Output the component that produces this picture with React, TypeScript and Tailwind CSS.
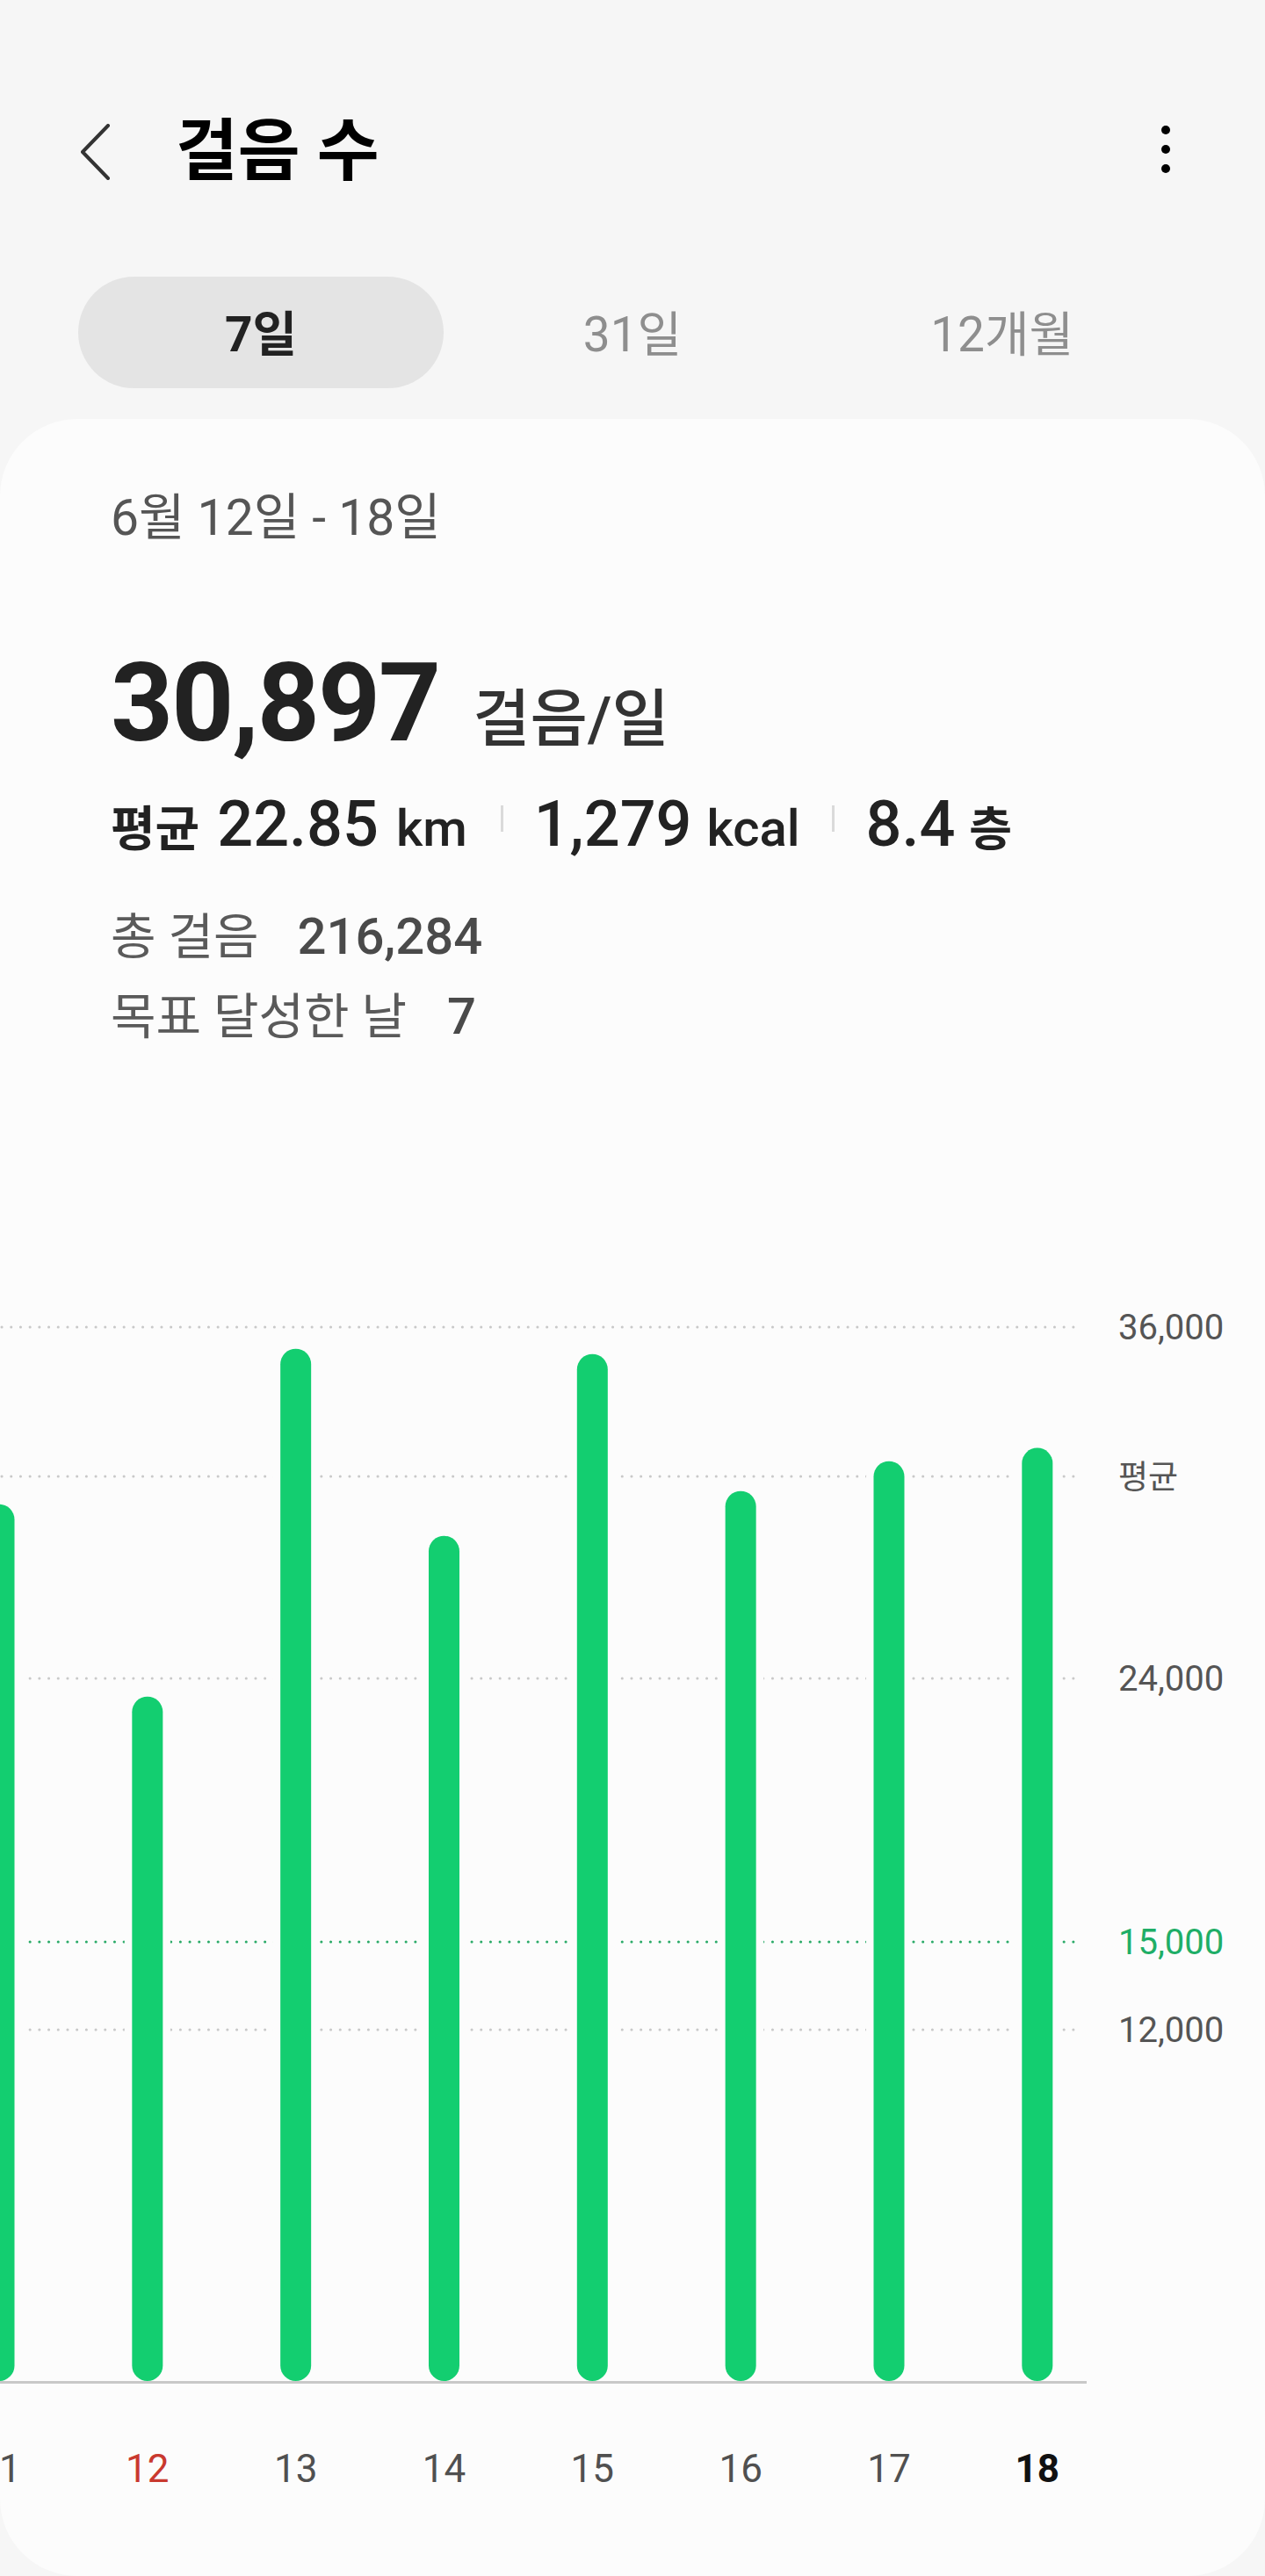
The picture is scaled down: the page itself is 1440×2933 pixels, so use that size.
import React from 'react';

const days = [
  { day: 11, steps: 29950, tone: 'normal' },
  { day: 12, steps: 23380, tone: 'sunday' },
  { day: 13, steps: 35260, tone: 'normal' },
  { day: 14, steps: 28870, tone: 'normal' },
  { day: 15, steps: 35080, tone: 'normal' },
  { day: 16, steps: 30400, tone: 'normal' },
  { day: 17, steps: 31420, tone: 'normal' },
  { day: 18, steps: 31874, tone: 'today' },
];

const AVG = 30897;
const COL = 168.83;
const FIRST_X = -1;
const ZERO_Y = 1261;
const toY = (v: number) => ZERO_Y - v / 30;

const gridLines = [
  { value: 36000, label: '36,000', kind: 'plain' },
  { value: AVG, label: '평균', kind: 'avg' },
  { value: 24000, label: '24,000', kind: 'plain' },
  { value: 15000, label: '15,000', kind: 'goal' },
  { value: 12000, label: '12,000', kind: 'plain' },
];

const dayColor: Record<string, string> = {
  normal: 'text-[#505050] font-normal',
  sunday: 'text-[#c9392f] font-normal',
  today: 'text-[#111111] font-bold',
};

const labelClass: Record<string, string> = {
  plain: 'text-[40px] text-[#555555]',
  avg: 'text-[37px] text-[#555555]',
  goal: 'text-[40px] text-[#1fae67]',
};

const StepsChart: React.FC = () => {
  return (
    <div className="relative h-[1280px]">
      <svg width="1240" height="1280" className="block">
        {gridLines.map((g) => (
          <line
            key={g.label}
            x1="2"
            x2="1230"
            y1={toY(g.value)}
            y2={toY(g.value)}
            stroke={g.kind === 'goal' ? '#2bab69' : '#c9c9c9'}
            strokeWidth="3"
            strokeLinecap="round"
            strokeDasharray="0.1 10.6"
          />
        ))}
        {days.map((d, i) => {
          const cx = FIRST_X + COL * i;
          const top = toY(d.steps);
          return (
            <rect key={`h${d.day}`} x={cx - 26} y={top - 8} width="52" height={ZERO_Y - top + 8} rx="26" fill="#fcfcfc" />
          );
        })}
        <line x1="0" x2="1237" y1="1262.5" y2="1262.5" stroke="#c8c8c8" strokeWidth="3" />
        {days.map((d, i) => {
          const cx = FIRST_X + COL * i;
          const top = toY(d.steps);
          return (
            <rect key={d.day} x={cx - 17.5} y={top} width="35" height={ZERO_Y - top} rx="17.5" fill="#13ce70" />
          );
        })}
      </svg>
      {gridLines.map((g) => (
        <div
          key={g.label}
          className={`absolute left-[1273px] -translate-y-1/2 leading-none ${labelClass[g.kind]}`}
          style={{ top: toY(g.value) + 1 }}
        >
          {g.label}
        </div>
      ))}
    </div>
  );
};

const App: React.FC = () => {
  return (
    <div className="h-[2933px] w-[1440px] overflow-hidden bg-[#f6f6f6] font-['Roboto','Noto_Sans_CJK_KR',sans-serif]">
      {/* Header */}
      <div className="mt-[118px] flex h-[110px] items-center pl-[90px] pr-[107px]">
        <svg width="36" height="64" viewBox="0 0 36 64" fill="none">
          <path d="M33 2 L4 32 L33 62" stroke="#333333" strokeWidth="4" strokeLinecap="round" strokeLinejoin="round" />
        </svg>
        <h1 className="ml-[74px] text-[77px] font-bold leading-none text-black">걸음 수</h1>
        <svg width="12" height="56" viewBox="0 0 12 56" className="ml-auto -translate-y-[3px]">
          <circle cx="6" cy="6" r="5" fill="#000" />
          <circle cx="6" cy="28" r="5" fill="#000" />
          <circle cx="6" cy="50" r="5" fill="#000" />
        </svg>
      </div>

      {/* Period tabs */}
      <div className="mt-[87px] grid h-[127px] grid-cols-3 px-[89px]">
        <div className="flex w-[416px] items-center justify-center rounded-full bg-[#e4e4e4] pt-[6px] text-[55px] font-bold text-[#222222]">7일</div>
        <div className="flex items-center justify-center pt-[6px] text-[55px] text-[#8e8e8e]">31일</div>
        <div className="flex items-center justify-center pt-[6px] text-[55px] text-[#8e8e8e]">12개월</div>
      </div>

      {/* Summary card */}
      <div className="mt-[35px] h-[2456px] overflow-hidden rounded-[88px] bg-[#fcfcfc]">
        <div className="px-[126px] pt-[80px]">
          <p className="text-[57px] leading-[66px] text-[#555555]">6월 12일 - 18일</p>

          <div className="mt-[116px] flex items-baseline">
            <span className="text-[124px] font-bold leading-none tracking-[-2px] text-[#222222]">30,897</span>
            <span className="ml-[38px] text-[71px] font-medium leading-none text-[#333333]">걸음/일</span>
          </div>

          <div className="mt-[40px] flex items-baseline text-[#222222]">
            <span className="text-[55px] font-bold leading-none">평균</span>
            <span className="ml-[20px] text-[72px] font-medium leading-none">22.85</span>
            <span className="ml-[20px] text-[58px] font-medium leading-none">km</span>
            <span className="ml-[38px] h-[30px] w-[3px] -translate-y-[16px] bg-[#dadada]" />
            <span className="ml-[35px] text-[72px] font-medium leading-none">1,279</span>
            <span className="ml-[17px] text-[58px] font-medium leading-none">kcal</span>
            <span className="ml-[36px] h-[30px] w-[3px] -translate-y-[16px] bg-[#dadada]" />
            <span className="ml-[36px] text-[72px] font-medium leading-none">8.4</span>
            <span className="ml-[16px] text-[53px] font-bold leading-none">층</span>
          </div>

          <div className="mt-[46px] text-[56px] leading-[90px]">
            <p>
              <span className="text-[#5a5a5a]">총 걸음</span>
              <span className="ml-[44px] text-[58px] font-medium text-[#4a4a4a]">216,284</span>
            </p>
            <p>
              <span className="text-[#5a5a5a]">목표 달성한 날</span>
              <span className="ml-[46px] text-[58px] font-medium text-[#4a4a4a]">7</span>
            </p>
          </div>
        </div>

        <div className="mt-[247px]">
          <StepsChart />
        </div>

        <div className="ml-[-85.4px] mt-[51px] flex">
          {days.map((d) => (
            <div key={d.day} className={`w-[168.83px] shrink-0 text-center text-[44px] leading-[60px] ${dayColor[d.tone]}`}>
              {d.day}
            </div>
          ))}
        </div>
      </div>
    </div>
  );
};

export default App;
